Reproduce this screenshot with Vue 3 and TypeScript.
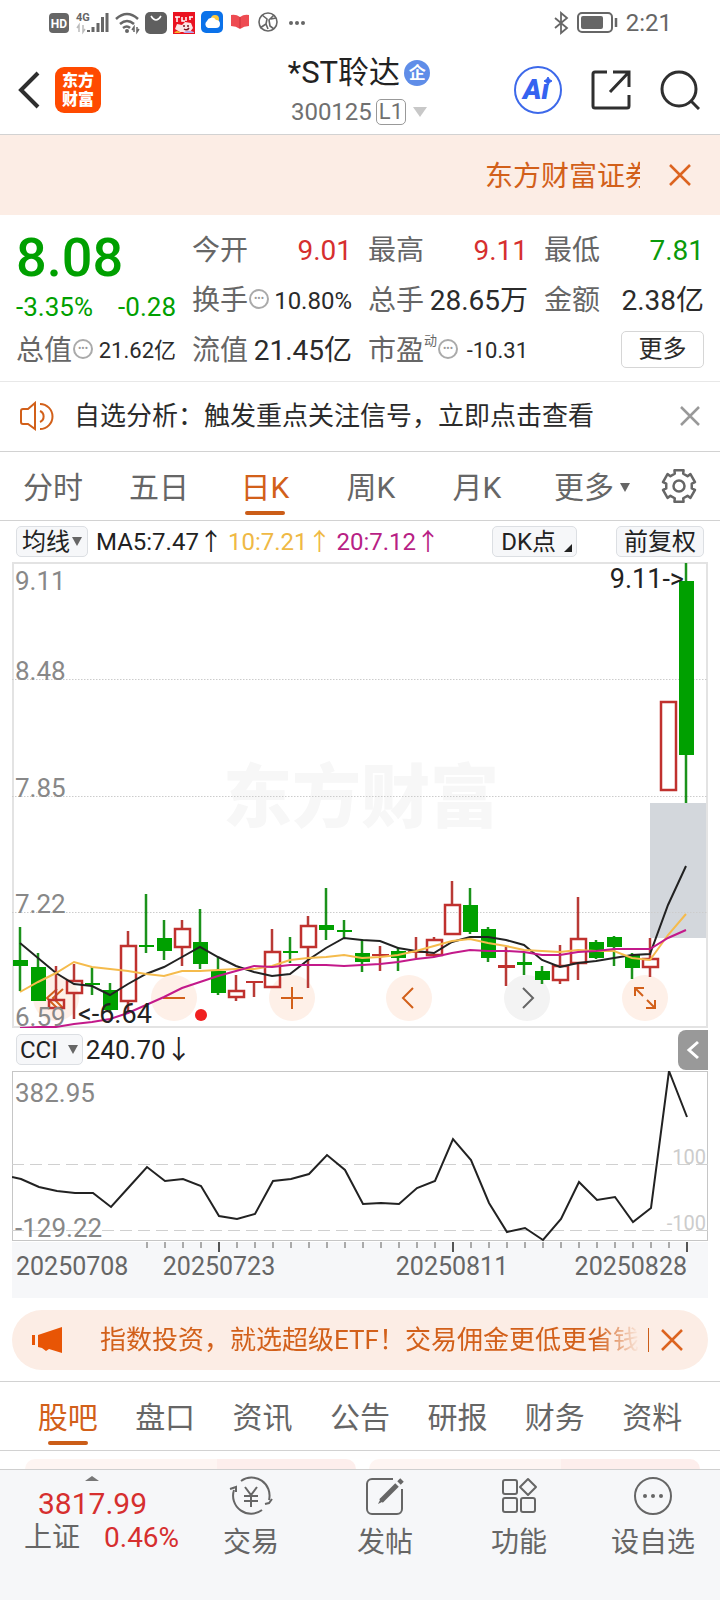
<script setup lang="ts">
import { ref } from 'vue'

type Candle = { up: boolean; high: number; top: number; bottom: number; low: number }

const STEP = 18
const xAt = (i: number): number => 9 + i * STEP

// [rising, high, body top, body bottom, low] in plot units
const rows: [number, number, number, number, number][] = [
  [0, 365, 398, 404, 429], [0, 391, 405, 439, 439], [1, 404, 437, 447, 447], [1, 402, 418, 432, 457],
  [0, 405, 421, 423, 433], [0, 421, 428, 448, 450], [1, 369, 383, 440, 449], [0, 332, 383, 385, 391],
  [0, 358, 376, 389, 398], [1, 358, 366, 386, 404], [0, 347, 380, 402, 407], [0, 395, 409, 431, 433],
  [1, 413, 428, 436, 439], [1, 419, 419, 421, 435], [1, 367, 389, 426, 426], [0, 375, 389, 391, 401],
  [1, 354, 363, 386, 426], [0, 326, 363, 368, 378], [0, 358, 368, 370, 376], [0, 377, 391, 400, 410],
  [1, 384, 392, 394, 409], [0, 385, 389, 396, 409], [1, 375, 389, 391, 396], [1, 375, 377, 394, 395],
  [1, 319, 342, 373, 373], [0, 326, 343, 370, 372], [0, 365, 367, 396, 400], [1, 385, 403, 406, 424],
  [0, 391, 400, 403, 413], [0, 404, 409, 418, 422], [1, 383, 403, 419, 422], [1, 335, 376, 402, 418],
  [0, 378, 380, 396, 397], [0, 374, 375, 385, 404], [0, 391, 393, 406, 417], [1, 376, 396, 406, 415],
  [1, 139, 139, 229, 229], [0, 1, 19, 193, 241],
]
const candles: Candle[] = rows.map(([u, high, top, bottom, low]) => ({ up: u === 1, high, top, bottom, low }))

const toPoints = (ys: number[]): string => ys.map((y, i) => `${xAt(i)},${y}`).join(' ')

const ma5 = toPoints([381, 396, 411, 422, 424, 433, 422, 412, 405, 395, 385, 395, 404, 410, 414, 412, 398, 386, 376, 378,
  379, 386, 389, 391, 380, 375, 375, 378, 383, 398, 405, 401, 399, 396, 393, 392, 343, 304])
const ma10 = toPoints([430, 420, 411, 400, 405, 407, 409, 412, 414, 409, 409, 408, 407, 407, 404, 398, 396, 395, 393, 396,
  395, 393, 389, 384, 379, 377, 381, 384, 388, 389, 390, 388, 389, 389, 396, 398, 373, 352])
const ma20 = toPoints([466, 465, 465, 462, 460, 457, 451, 443, 435, 426, 420, 414, 409, 404, 405, 403, 403, 403, 404, 403,
  402, 400, 397, 395, 391, 388, 389, 389, 390, 393, 393, 390, 389, 387, 387, 387, 376, 368])
const cci = '0,106 ' + toPoints([108, 116, 120, 122, 122, 136, 116, 96, 110, 108, 115, 145, 148, 143, 110, 108, 103, 84, 99, 133,
  132, 133, 117, 110, 68, 89, 132, 161, 157, 169, 148, 111, 129, 126, 151, 137, 0, 46])

const priceLabels = [
  { text: '9.11', y: 28 }, { text: '8.48', y: 118 }, { text: '7.85', y: 235 }, { text: '7.22', y: 351 }, { text: '6.59', y: 464 },
]
const gridYs = [117, 234, 350]
const ticks = Array.from({ length: 31 }, (_, k) => k + 7)
const majorTicks = [11, 24, 37]

const gear = Array.from({ length: 6 }, (_, k) => {
  const base = k * 60 - 90
  return [[13, -19], [16.5, -16], [16.5, 16], [13, 19]]
    .map(([r, a]) => {
      const t = ((base + a) * Math.PI) / 180
      return `${(18 + r * Math.cos(t)).toFixed(2)},${(18 + r * Math.sin(t)).toFixed(2)}`
    })
    .join(' ')
}).join(' ')

const periods = ['分时', '五日', '日K', '周K', '月K']
const period = ref('日K')
const sections = ['股吧', '盘口', '资讯', '公告', '研报', '财务', '资料']
const section = ref('股吧')
const showTip = ref(true)
</script>

<template>
  <div class="page">
    <div class="status">
      <svg class="status-left" viewBox="0 0 310 44" aria-hidden="true">
        <rect x="49" y="13" width="20" height="20" rx="4" fill="#666" />
        <text x="59" y="28" text-anchor="middle" font-size="12" font-weight="700" fill="#fff">HD</text>
        <text x="76" y="21" font-size="11" font-weight="700" fill="#666">4G</text>
        <path d="M79 32v-7l-2 3M83 25v7l2-3" stroke="#bbb" stroke-width="1.5" fill="none" />
        <path d="M88.500 32v-2M93 32v-5M98 32v-9M102.500 32V17M107 32V13" stroke="#666" stroke-width="3" />
        <path d="M116 19q11-10 22 0M120 24q7-6 14 0M123 28q4-3 7 0" stroke="#666" stroke-width="2.500" fill="none" />
        <circle cx="127" cy="31" r="2" fill="#666" />
        <path d="M134 32v-5l-2 3M137 27v5l2-3" stroke="#666" stroke-width="1.500" fill="none" />
        <rect x="145" y="12" width="22" height="22" rx="5" fill="#5f5f5f" />
        <path d="M151 16q5 8 10 0" stroke="#fff" stroke-width="1.500" fill="none" />
        <rect x="173" y="12" width="22" height="22" fill="#ea1220" />
        <path d="M175 17h5m-3 0v5m5-5v4h3m1-4v4m3-4h4m-3 0v3" stroke="#fff" stroke-width="1.500" fill="none" />
        <path d="M177 24l5 1 3-3 6 1 2 5-3 4h-10l-5-3z" fill="#fbe5e4" />
        <path d="M174 33q3-4 7 0z" fill="#f7b52c" />
        <path d="M183 33q4-4 11-1v1z" fill="#b9a6e8" />
        <path d="M184 25v2m4-2v2m-4 2q3 2 5-1" stroke="#7b1620" stroke-width="1.500" fill="none" />
        <rect x="201" y="11" width="22" height="22" rx="5" fill="#0b72ea" />
        <circle cx="215" cy="19" r="4" fill="#ffc93c" />
        <path d="M208 28a4 4 0 0 1-1-7 5 5 0 0 1 9-1 4 4 0 0 1 0 8z" fill="#fff" />
        <path d="M231 15q5-1 9 2 4-3 9-2v11q-5 0-9 3-4-3-9-3z" fill="#ee4b52" />
        <path d="M240 17v11" stroke="#c9333b" />
        <g fill="none" stroke="#666" stroke-width="1.600">
          <circle cx="268" cy="22" r="9" />
          <path d="M262 15l5 4-1 5-6 4M274 15l-5 5 1 6 4 3M271 19l5-1M266 24l2 5" />
        </g>
        <g fill="#666"><circle cx="291" cy="23" r="2" /><circle cx="297" cy="23" r="2" /><circle cx="303" cy="23" r="2" /></g>
      </svg>
      <div class="status-right">
        <svg width="64" height="24" viewBox="0 0 64 24" aria-hidden="true">
          <path d="M1 7l12 10-6 5V2l6 5L1 17" fill="none" stroke="#666" stroke-width="1.800" />
          <rect x="24" y="2" width="34" height="19" rx="4" fill="none" stroke="#666" stroke-width="2" />
          <rect x="27" y="5" width="22" height="13" rx="2" fill="#666" />
          <path d="M62 7v9" stroke="#666" stroke-width="2.500" />
        </svg>
        <span>2:21</span>
      </div>
    </div>

    <header class="header">
      <div class="header-left">
        <button class="plain" aria-label="返回">
          <svg width="22" height="38" viewBox="0 0 22 38"><path d="M20 2L3 19l17 17" fill="none" stroke="#2f2f2f" stroke-width="4" /></svg>
        </button>
        <div class="logo"><span>东方</span><span>财富</span></div>
      </div>
      <div class="title">
        <div class="title-row"><h1>*ST聆达</h1><span class="badge">企</span></div>
        <div class="code-row"><span>300125</span><span class="level">L1</span><i class="caret"></i></div>
      </div>
      <div class="header-right">
        <button class="plain" aria-label="Ai">
          <svg width="48" height="48" viewBox="0 0 48 48">
            <circle cx="24" cy="24" r="23" fill="#fff" stroke="#3d69ea" stroke-width="2" />
            <text x="9" y="33" font-size="28" font-weight="900" font-style="italic" fill="#3563f0">Ai</text>
            <path d="M28 9h12v9H28z" fill="#fff" />
            <path d="M34 11l1.500 2.500L38 15l-2.500 1.500L34 19l-1.500-2.500L30 15l2.500-1.500z" fill="#3563f0" stroke="#3563f0" />
          </svg>
        </button>
        <button class="plain" aria-label="分享">
          <svg width="40" height="40" viewBox="0 0 40 40" fill="none" stroke="#2f2f2f" stroke-width="3">
            <path d="M16 2H4a2 2 0 0 0-2 2v32a2 2 0 0 0 2 2h32a2 2 0 0 0 2-2V25M22 2h16v15M38 2L19 22" />
          </svg>
        </button>
        <button class="plain" aria-label="搜索">
          <svg width="40" height="40" viewBox="0 0 40 40" fill="none" stroke="#2f2f2f" stroke-width="3">
            <circle cx="19" cy="19" r="17" /><path d="M31 31l8 8" />
          </svg>
        </button>
      </div>
    </header>

    <div class="banner">
      <a href="#" class="banner-text">东方财富证券</a>
      <button class="plain" aria-label="关闭">
        <svg width="22" height="22" viewBox="0 0 22 22"><path d="M1 1l20 20M21 1L1 21" stroke="#dc6420" stroke-width="2.500" /></svg>
      </button>
    </div>

    <section class="quote">
      <div class="price">
        <strong>8.08</strong>
        <div class="change"><span>-3.35%</span><span>-0.28</span></div>
      </div>
      <div class="cell"><span>今开</span><b class="red">9.01</b></div>
      <div class="cell"><span>最高</span><b class="red">9.11</b></div>
      <div class="cell"><span>最低</span><b class="green">7.81</b></div>
      <div class="cell"><span>换手<i class="more-dot">•••</i></span><b class="mid">10.80%</b></div>
      <div class="cell"><span>总手</span><b>28.65万</b></div>
      <div class="cell"><span>金额</span><b>2.38亿</b></div>
      <div class="cell"><span>总值<i class="more-dot">•••</i></span><b class="small">21.62亿</b></div>
      <div class="cell"><span>流值</span><b>21.45亿</b></div>
      <div class="cell"><span>市盈<sup>动</sup><i class="more-dot">•••</i></span><b class="small">-10.31</b></div>
      <div class="cell end"><button class="more-btn">更多</button></div>
    </section>

    <div v-if="showTip" class="tip">
      <svg width="36" height="30" viewBox="0 0 36 30" fill="none" stroke="#d2601a" stroke-width="2" aria-hidden="true">
        <path d="M17 2v26l-7-5H5a2 2 0 0 1-2-2V10a2 2 0 0 1 2-2h5zM22 10a6 6 0 0 1 0 11M22 3a12.500 12.500 0 0 1 0 25" />
      </svg>
      <span class="tip-text">自选分析：触发重点关注信号，立即点击查看</span>
      <button class="plain" aria-label="关闭" @click="showTip = false">
        <svg width="20" height="20" viewBox="0 0 20 20"><path d="M1 1l18 18M19 1L1 19" stroke="#999" stroke-width="2.500" /></svg>
      </button>
    </div>

    <nav class="periods">
      <button v-for="p in periods" :key="p" class="tab" :class="{ active: p === period }" @click="period = p">{{ p }}</button>
      <button class="tab">更多<i class="tri"></i></button>
      <button class="tab gear" aria-label="设置">
        <svg width="36" height="36" viewBox="0 0 36 36" fill="none" stroke="#666" stroke-width="2.500" stroke-linejoin="round">
          <polygon :points="gear" /><circle cx="18" cy="18" r="5.500" />
        </svg>
      </button>
    </nav>

    <div class="chart-block">
      <div class="ma-row">
        <button class="chip">均线<i class="tri"></i></button>
        <span class="ma dark">MA5:7.47↑</span>
        <span class="ma yellow">10:7.21↑</span>
        <span class="ma pink">20:7.12↑</span>
        <button class="chip dk">DK点<i class="corner"></i></button>
        <button class="chip adj">前复权</button>
      </div>

      <div class="kline">
        <div class="controls">
          <button class="round" aria-label="最早"><svg viewBox="0 0 46 46"><path d="M24 14l-10 9 10 10M30 14l-10 9 10 10" /></svg></button>
          <button class="round" aria-label="缩小"><svg viewBox="0 0 46 46"><path d="M12 23h22" /></svg></button>
          <button class="round" aria-label="放大"><svg viewBox="0 0 46 46"><path d="M12 23h22M23 12v22" /></svg></button>
          <button class="round" aria-label="向左"><svg viewBox="0 0 46 46"><path d="M27 13L17 23l10 10" /></svg></button>
          <button class="round off" aria-label="向右"><svg viewBox="0 0 46 46"><path d="M19 13l10 10-10 10" /></svg></button>
          <button class="round" aria-label="全屏"><svg viewBox="0 0 46 46"><path d="M13 21v-8h9M13 13l8 8M33 25v8h-9M33 33l-8-8" /></svg></button>
        </div>
        <svg class="plot" viewBox="0 0 696 466" role="img" aria-label="日K线图">
          <text x="349" y="260" text-anchor="middle" font-size="69" font-weight="900" fill="#f7f7f7">东方财富</text>
          <rect x="638" y="241" width="57" height="135" fill="#d3d7dc" />
          <rect x="1" y="1" width="694" height="464" fill="none" stroke="#e3e3e3" stroke-width="2" />
          <path v-for="y in gridYs" :key="y" :d="`M0 ${y + 0.5}H696`" stroke="#ccc" stroke-dasharray="1.500 1.500" />
          <g v-for="(c, i) in candles" :key="i">
            <template v-if="c.up">
              <path :d="`M${xAt(i) - 1} ${c.high}V${c.top}M${xAt(i) - 1} ${c.bottom}V${c.low}`" stroke="#b93a36" stroke-width="2.500" />
              <rect v-if="c.bottom - c.top > 4" :x="xAt(i) - 8" :y="c.top + 1" width="15" :height="c.bottom - c.top - 2" fill="none" stroke="#c0312e" stroke-width="2.500" />
              <rect v-else :x="xAt(i) - 9" :y="c.top" width="17" :height="c.bottom - c.top" fill="#c0312e" />
            </template>
            <template v-else>
              <path :d="`M${xAt(i) - 1} ${c.high}V${c.low}`" stroke="#1b921b" stroke-width="2.500" />
              <rect :x="xAt(i) - 8" :y="c.top" width="15" :height="c.bottom - c.top" fill="#00a000" />
            </template>
          </g>
          <g fill="none" stroke-width="2" transform="translate(-1 0)">
            <polyline :points="ma5" stroke="#222" />
            <polyline :points="ma10" stroke="#f5bb4c" />
            <polyline :points="ma20" stroke="#c3198a" />
          </g>
          <circle cx="189" cy="453" r="6" fill="#f02020" />
          <g font-size="26" fill="#888"><text v-for="l in priceLabels" :key="l.text" x="3" :y="l.y">{{ l.text }}</text></g>
          <g font-size="27" fill="#222">
            <text x="66" y="461">&lt;-6.64</text>
            <text x="672" y="26" text-anchor="end">9.11-&gt;</text>
          </g>
        </svg>
      </div>

      <div class="cci-row">
        <button class="chip">CCI<i class="tri wide"></i></button>
        <span class="cci-val">240.70↓</span>
        <button class="drawer" aria-label="展开">
          <svg width="30" height="40" viewBox="0 0 30 40"><path d="M20 12l-9 8 9 8" fill="none" stroke="#fff" stroke-width="3" /></svg>
        </button>
      </div>

      <svg class="plot" viewBox="0 0 696 227" role="img" aria-label="CCI指标">
        <rect x="0" y="171" width="696" height="56" fill="#f6f7f9" />
        <rect x="0.5" y="0.5" width="695" height="169" fill="#fff" stroke="#c6c6c6" />
        <path d="M0 93.500H696M0 159.500H696" stroke="#d0d0d0" stroke-dasharray="12 6" />
        <g font-size="20" fill="#ccc" text-anchor="end"><text x="694" y="93">100</text><text x="694" y="159">-100</text></g>
        <g font-size="26" fill="#888"><text x="3" y="31">382.95</text><text x="3" y="166">-129.22</text></g>
        <polyline :points="cci" fill="none" stroke="#222" stroke-width="2" />
        <path v-for="t in ticks" :key="t" :d="`M${xAt(t)} 171v${majorTicks.includes(t) ? 10 : 6}`" :stroke="majorTicks.includes(t) ? '#555' : '#aaa'" stroke-width="2" />
        <g font-size="25" fill="#666">
          <text x="4" y="204">20250708</text>
          <text x="207" y="204" text-anchor="middle">20250723</text>
          <text x="440" y="204" text-anchor="middle">20250811</text>
          <text x="675" y="204" text-anchor="end">20250828</text>
        </g>
      </svg>

      <div class="promo">
        <svg width="32" height="28" viewBox="0 0 32 28" fill="#e85505" aria-hidden="true">
          <path d="M0 9h3v10H0zM6 9l24-8v26l-13-4-3 2-4-3-4-1z" />
        </svg>
        <a href="#" class="promo-text">指数投资，就选超级ETF！交易佣金更低更省钱</a>
        <i class="bar"></i>
        <button class="plain" aria-label="关闭">
          <svg width="22" height="22" viewBox="0 0 22 22"><path d="M1 1l20 20M21 1L1 21" stroke="#dc6420" stroke-width="2.500" /></svg>
        </button>
      </div>
    </div>

    <nav class="sections">
      <button v-for="s in sections" :key="s" class="tab" :class="{ active: s === section }" @click="section = s">{{ s }}</button>
    </nav>

    <div class="cards"><div class="card"></div><div class="card"></div></div>

    <footer class="dock">
      <a href="#" class="index">
        <i class="up"></i>
        <span class="index-value">3817.99</span>
        <span class="index-row"><span>上证</span><span class="red">0.46%</span></span>
      </a>
      <button class="dock-btn">
        <svg width="44" height="40" viewBox="0 0 44 40" fill="none" stroke="#666" stroke-width="2">
          <path d="M12 5A18 18 0 0 1 40 24M36 28l4-1 3-4M33 34A18 18 0 0 1 5 14M1 13l6-2v5M16 11l6 8 6-8M22 19v12M15 20h14M15 25h14" />
        </svg>交易
      </button>
      <button class="dock-btn">
        <svg width="40" height="40" viewBox="0 0 40 40" fill="none" stroke="#666" stroke-width="2">
          <path d="M28 3H7a5 5 0 0 0-5 5v25a5 5 0 0 0 5 5h25a5 5 0 0 0 5-5V13" />
          <path d="M16 25L32 9" stroke-width="5" /><path d="M13 28l3-6 3 3z" fill="#666" stroke="none" /><path d="M34 7l3-3" stroke-width="5" />
        </svg>发帖
      </button>
      <button class="dock-btn">
        <svg width="40" height="40" viewBox="0 0 40 40" fill="none" stroke="#666" stroke-width="2">
          <rect x="4" y="4" width="14" height="14" rx="2" /><rect x="4" y="22" width="14" height="14" rx="2" /><rect x="22" y="22" width="14" height="14" rx="2" />
          <path d="M29 3l8 8-8 8-8-8z" stroke-linejoin="round" />
        </svg>功能
      </button>
      <button class="dock-btn">
        <svg width="40" height="40" viewBox="0 0 40 40" fill="none" stroke="#666" stroke-width="2">
          <circle cx="20" cy="20" r="18" />
          <g fill="#666" stroke="none"><circle cx="12" cy="20" r="2" /><circle cx="20" cy="20" r="2" /><circle cx="28" cy="20" r="2" /></g>
        </svg>设自选
      </button>
    </footer>
  </div>
</template>

<style>
body { margin: 0; background: #fff; }
</style>

<style scoped>
.page, .page * { box-sizing: border-box; }
.page {
  min-height: 100vh; display: flex; flex-direction: column; background: #fff; color: #2b2b2b;
  font-family: Roboto, "Noto Sans CJK SC", sans-serif; font-size: 28px; line-height: 32px;
}
svg { display: block; flex: none; }
button { font: inherit; color: inherit; background: none; border: 0; padding: 0; margin: 0; cursor: pointer; }
a { color: inherit; text-decoration: none; }
i { font-style: normal; }
.red { color: #d62f2f; }
.green { color: #0a9a0a; }

.status { display: flex; justify-content: space-between; height: 45px; padding-right: 48px; }
.status-left { width: 310px; height: 44px; }
.status-right { display: flex; align-items: center; gap: 8px; color: #666; font-size: 24px; }

.header { display: grid; grid-template-columns: 1fr auto 1fr; align-items: center; height: 90px; padding: 0 20px 0 18px; border-bottom: 1px solid #d2d2d2; }
.header-left { display: flex; align-items: center; gap: 15px; }
.logo { display: grid; place-content: center; width: 46px; height: 46px; border-radius: 9px; background: #ff4a00; color: #fff; font-size: 16px; font-weight: 900; line-height: 19px; }
.title { display: flex; flex-direction: column; align-items: center; }
.title-row { display: flex; align-items: center; gap: 4px; }
h1 { margin: 0; font-size: 31px; font-weight: 400; line-height: 43px; color: #222; }
.badge { display: grid; place-items: center; width: 26px; height: 26px; border-radius: 13px; background: #5f8de8; color: #fff; font-size: 17px; font-weight: 700; line-height: 24px; }
.code-row { display: flex; align-items: center; padding-top: 2px; color: #707070; font-size: 24px; }
.level { margin-left: 4px; padding: 0 2px; border: 1px solid #999; border-radius: 5px; font-size: 22px; line-height: 24px; }
.caret { margin-left: 7px; border: 7px solid transparent; border-top: 10px solid #c8c8c8; border-bottom: 0; }
.header-right { display: flex; align-items: center; justify-content: flex-end; gap: 29px; }

.banner { display: flex; align-items: center; justify-content: flex-end; gap: 29px; height: 80px; padding-right: 29px; background: #fcede5; color: #d2601a; }
.banner-text { width: 155px; padding-top: 4px; line-height: 36px; overflow: hidden; white-space: nowrap; }

.quote { display: grid; grid-template-columns: repeat(4, 1fr); grid-auto-rows: 50px; column-gap: 16px; padding: 9px 16px 7px; border-bottom: 1px solid #e8e8e8; }
.price { grid-row: span 2; display: flex; flex-direction: column; color: #00a000; }
.price strong { font-size: 54px; font-weight: 500; line-height: 67px; }
.change { display: flex; justify-content: space-between; font-size: 26px; }
.cell { display: flex; align-items: center; justify-content: space-between; padding-top: 3px; white-space: nowrap; color: #666; }
.cell > span { display: flex; align-items: center; }
.cell b { font-weight: 400; }
.cell b:not(.red):not(.green) { color: #2b2b2b; }
.cell b.mid { font-size: 24px; }
.cell b.small { font-size: 22px; }
.cell sup { align-self: flex-start; margin-bottom: 20px; font-size: 13px; line-height: 12px; }
.more-dot { display: grid; place-items: center; width: 20px; height: 20px; margin: 0 0 4px 1px; border: 2px solid #aaa; border-radius: 10px; color: #999; font-size: 10px; line-height: 16px; }
.cell.end { justify-content: flex-end; padding-top: 0; }
.more-btn { width: 83px; height: 37px; border: 1px solid #d6d6d6; border-radius: 5px; color: #2b2b2b; font-size: 24px; }

.tip { display: flex; align-items: center; height: 70px; padding: 0 20px 2px 18px; border-bottom: 1px solid #d2d2d2; font-size: 26px; }
.tip-text { flex: 1; margin-left: 20px; white-space: nowrap; }

.periods { display: grid; grid-template-columns: repeat(5, 106fr) 124fr 66fr; height: 69px; border-bottom: 1px solid #d2d2d2; }
.tab { position: relative; display: flex; align-items: center; justify-content: center; padding-top: 3px; color: #666; font-size: 30px; }
.tab.active { color: #d2601a; }
.tab.active::after { content: ""; position: absolute; left: 50%; bottom: 5px; width: 40px; height: 4px; margin-left: -20px; border-radius: 2px; background: #cb5d18; }
.gear { padding: 0 16px 0 0; }
.tri { margin-left: 6px; border: 5px solid transparent; border-top: 9px solid #666; border-bottom: 0; }

.chart-block { padding: 0 12px; }
.ma-row { display: flex; align-items: center; height: 41px; padding: 0 4px; font-size: 24px; white-space: nowrap; }
.chip { display: flex; align-items: center; height: 31px; padding: 0 5px; border: 1px solid #dcdfe3; border-radius: 5px; background: #f6f7f9; color: #222; font-size: 24px; }
.chip .tri { margin-left: 2px; }
.chip .tri.wide { margin-left: 10px; }
.ma { margin-left: 5px; }
.ma.dark { margin-left: 8px; color: #222; }
.yellow { color: #efb945; }
.pink { color: #b81f85; }
.chip.dk { margin-left: auto; padding: 0 4px 0 8px; }
.corner { align-self: flex-end; margin: 0 0 4px 8px; border-left: 8px solid transparent; border-bottom: 8px solid #222; }
.chip.adj { margin-left: 39px; padding: 0 7px; }

.kline { position: relative; }
.plot { position: relative; width: 100%; height: auto; pointer-events: none; }
.controls { position: absolute; left: 21px; right: 40px; bottom: 7px; display: flex; justify-content: space-between; }
.round { width: 46px; height: 46px; border-radius: 23px; background: #fef0e8; }
.round svg { fill: none; stroke: #d2601a; stroke-width: 2; }
.round.off { background: #f3f3f3; }
.round.off svg { stroke: #666; }

.cci-row { display: flex; align-items: center; height: 43px; padding-left: 4px; }
.cci-row .chip { padding: 0 4px 0 3px; }
.cci-val { flex: 1; margin-left: 3px; color: #222; font-size: 26px; }
.drawer { width: 30px; height: 40px; border-radius: 8px 0 0 8px; background: #999; }

.promo { display: flex; align-items: center; height: 60px; margin: 12px 0 11px; padding: 0 25px 0 20px; border-radius: 30px; background: #fcede5; color: #d2601a; font-size: 26px; }
.promo-text { flex: 1; min-width: 0; margin-left: 36px; overflow: hidden; white-space: nowrap; -webkit-mask-image: linear-gradient(90deg, #000 92%, transparent); mask-image: linear-gradient(90deg, #000 92%, transparent); }
.bar { width: 1px; height: 24px; margin: 0 12px 0 8px; background: #cb5d18; }

.sections { display: grid; grid-template-columns: repeat(7, 1fr); height: 70px; padding: 0 19px; border-top: 1px solid #d2d2d2; border-bottom: 1px solid #d2d2d2; }

.cards { flex: 1; display: flex; gap: 13px; min-height: 18px; padding: 8px 20px 0 25px; }
.card { flex: 1; border-radius: 14px 14px 0 0; background: linear-gradient(90deg, #fef5f2 58%, #fdeeec 58%); }

.dock { display: grid; grid-template-columns: 184fr repeat(4, 134fr); height: 131px; border-top: 1px solid #cfcfcf; background: #f6f7f9; color: #666; }
.index { position: relative; display: flex; flex-direction: column; gap: 2px; padding: 18px 0 0 24px; }
.up { position: absolute; top: 6px; left: 50%; margin-left: -7px; border: 7px solid transparent; border-bottom: 5px solid #777; border-top: 0; }
.index-value { padding-left: 14px; color: #d62f2f; font-size: 30px; }
.index-row { display: flex; gap: 24px; }
.dock-btn { display: flex; flex-direction: column; align-items: center; gap: 11px; padding-top: 6px; }
</style>
